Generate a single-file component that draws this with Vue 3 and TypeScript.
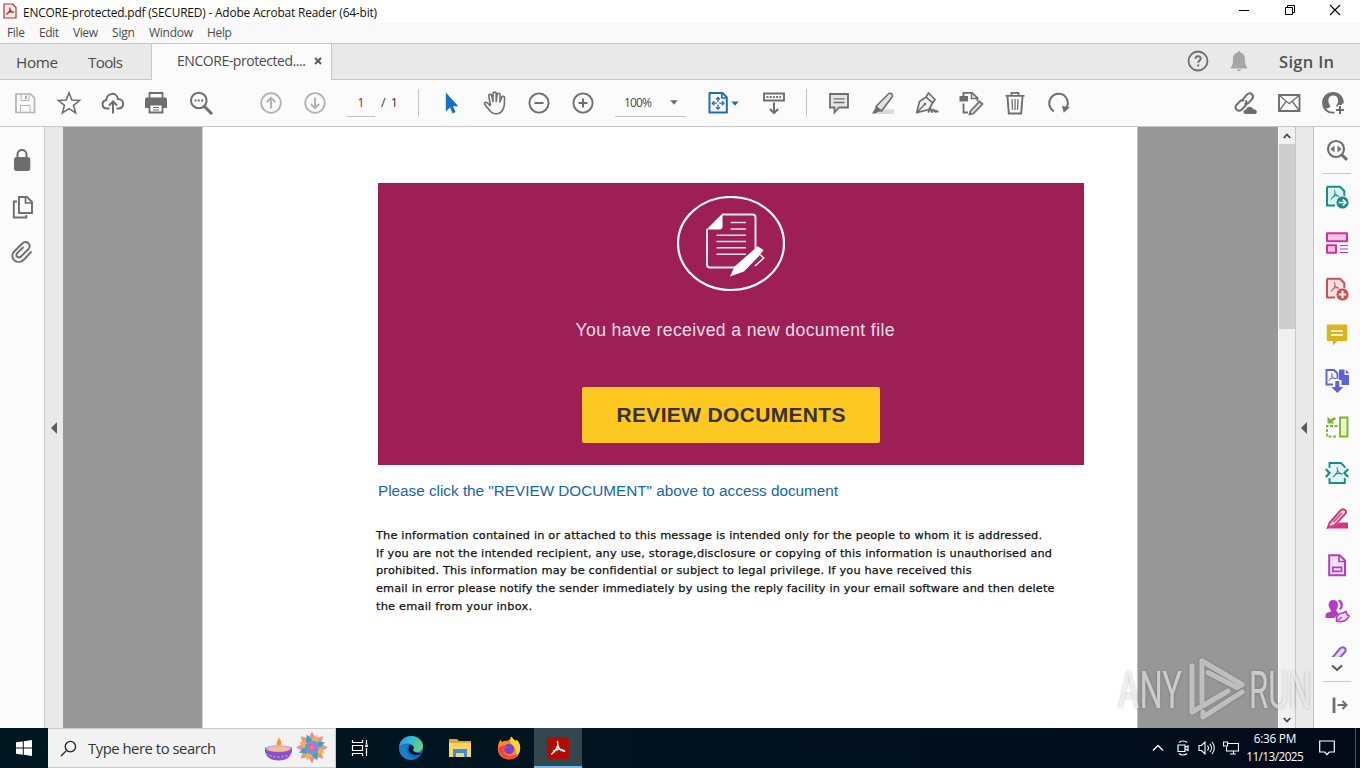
<script setup lang="ts">
interface MenuItem { label: string; width: number }

const menus: MenuItem[] = [
  { label: 'File', width: 18 },
  { label: 'Edit', width: 20 },
  { label: 'View', width: 25 },
  { label: 'Sign', width: 23 },
  { label: 'Window', width: 44 },
  { label: 'Help', width: 25 },
]

const notice: MenuItem[] = [
  { label: 'The information contained in or attached to this message is intended only for the people to whom it is addressed.', width: 666 },
  { label: 'If you are not the intended recipient, any use, storage,disclosure or copying of this information is unauthorised and', width: 676 },
  { label: 'prohibited. This information may be confidential or subject to legal privilege. If you have received this', width: 595.5 },
  { label: 'email in error please notify the sender immediately by using the reply facility in your email software and then delete', width: 678.5 },
  { label: 'the email from your inbox.', width: 156 },
]

// Tracks a label out (or in) so that it fills the given width.
const vFit = {
  mounted(el: HTMLElement, binding: { value: number }) {
    const count = (el.textContent ?? '').length
    const natural = el.getBoundingClientRect().width
    const step = (binding.value - natural) / Math.max(1, count - 1)
    el.style.letterSpacing = `${step.toFixed(3)}px`
    el.style.marginRight = `${(-step).toFixed(3)}px`
  },
}
</script>

<template>
  <div class="screen">
    <svg class="defs" aria-hidden="true">
      <symbol id="tri" viewBox="0 0 12 12">
        <path d="M5.6 1.2c1 2.6-.6 6.600-3.800 9.300M5.600 1.200c.1 3.300 1.600 5.800 5.200 6.400M3.600 7.800c2.200-1 4.600-1.300 7.200-.3" fill="none" stroke="currentColor" stroke-width="1.1" stroke-linecap="round" />
      </symbol>
      <symbol id="sheet" viewBox="0 0 24 24">
        <path d="M2 1.700h13l4.300 4.300v6M10 20.500H2V1.700" fill="none" stroke="currentColor" stroke-width="2" stroke-linejoin="round" />
      </symbol>
    </svg>

    <header class="titlebar">
      <svg class="applogo" viewBox="0 0 14 16"><path d="M1 1h8.500l3.500 3.500V15H1z" fill="#fff1ef" stroke="#c8262c" stroke-width="1.200" stroke-linejoin="round" /><path d="M6.700 4.500c.8 2-.6 5-3.500 7M6.700 4.500c0 2.500 1.500 4.500 4.300 5M4.500 9.800c2-1 4.500-1.200 6.500-.3" fill="none" stroke="#c8262c" stroke-width="1.300" /></svg>
      <span v-fit="354" class="title">ENCORE-protected.pdf (SECURED) - Adobe Acrobat Reader (64-bit)</span>
      <div class="winbtns">
        <svg viewBox="0 0 12 12"><path d="M1 6.500h10" stroke="#000" /></svg>
        <svg viewBox="0 0 12 12"><path d="M1.500 3.500h7v7h-7zM3.500 3.500v-2h7v7h-2" fill="none" stroke="#000" /></svg>
        <svg viewBox="0 0 12 12"><path d="M1 1l10 10M11 1L1 11" stroke="#000" stroke-width="1.100" /></svg>
      </div>
    </header>

    <nav class="menubar">
      <span v-for="m in menus" :key="m.label" class="menu"><span v-fit="m.width" class="t">{{ m.label }}</span></span>
    </nav>

    <div class="tabs">
      <div class="tab home"><span v-fit="42" class="t">Home</span></div>
      <div class="tab tools"><span v-fit="35" class="t">Tools</span></div>
      <div class="tab active">
        <span v-fit="129" class="t">ENCORE-protected....</span>
        <svg class="close" viewBox="0 0 8 8"><path d="M1 1l6 6M7 1L1 7" stroke="#555" stroke-width="1.800" /></svg>
      </div>
      <div class="account">
        <svg class="ic" viewBox="0 0 24 24"><circle cx="12" cy="12" r="9.500" fill="none" stroke="#6e6e6e" stroke-width="1.800" /><path d="M9.500 9.700c0-3.200 5.200-3.200 5.200-.2 0 2-2.500 2.200-2.500 4.300M12.200 15.500v2" fill="none" stroke="#6e6e6e" stroke-width="2" /></svg>
        <svg class="ic bell" viewBox="0 0 24 24"><path d="M12 2c1 0 1.500.8 1.500 1.700 3.400.8 4.500 3.200 4.500 6.300 0 4.500.7 6.500 2.200 8.500v1H3.800v-1C5.300 16.500 6 14.500 6 10c0-3.100 1.100-5.500 4.500-6.300C10.500 2.800 11 2 12 2zM9.800 20.400h4.400c-.4 2-4 2-4.400 0z" fill="#a6a6a6" stroke="none" /></svg>
        <span v-fit="55" class="t signin">Sign In</span>
      </div>
    </div>

    <div class="toolbar">
      <div class="group first">
        <div class="cell"><svg class="ic dim" viewBox="0 0 24 24"><path d="M3 3h14.500L21.500 7v14.500H3z" stroke-width="1.700" /><path d="M8 3.500v6h8v-6" /><path d="M13 4.500v3.500" stroke-width="2" /><path d="M7.500 21v-6.500h9.500V21" /></svg></div>
        <div class="cell"><svg class="ic" viewBox="0 0 24 24"><path d="M12 1.800l2.800 7.300 7.800.4-6.100 4.900 2.100 7.500-6.600-4.200-6.600 4.200 2.100-7.500L1.400 9.500l7.800-.4z" stroke-width="1.600" /></svg></div>
        <div class="cell"><svg class="ic" viewBox="0 0 24 24"><path d="M8.500 17.500H6c-6 0-5.600-7.800-.8-8.300C5.500 1.500 16 .5 17 8c6.600-.2 6.900 9.500.5 9.500h-2" stroke-width="2" /><path d="M12 22.500V11M8 14.500l4-4 4 4" stroke-width="2" /></svg></div>
        <div class="cell"><svg class="ic shift" viewBox="0 0 24 24"><path d="M5.500 7V2h13v5" stroke-width="1.800" /><path d="M2.500 6.500h19a1.500 1.500 0 0 1 1.500 1.500v9h-4v-4H5v4H1V8a1.500 1.500 0 0 1 1.500-1.500z" class="f" /><path d="M5.500 13.500h13v8h-13z" fill="#fff" stroke-width="1.800" /><path d="M9 16.500h6M9 19h6" stroke-width="1.200" /></svg></div>
        <div class="cell"><svg class="ic" viewBox="0 0 24 24"><circle cx="9.800" cy="9.500" r="7.800" stroke-width="2" /><path d="M15.500 15.500l6.700 6.700" stroke-width="3" stroke-linecap="round" /><path d="M5.500 9.500h2M8.800 9.500h2M12.100 9.500h2" stroke-width="2" /></svg></div>
      </div>
      <div class="group nav">
        <div class="cell"><svg class="ic dim" viewBox="0 0 24 24"><circle cx="12" cy="12" r="9.800" stroke-width="1.800" /><path d="M12 17.500V7M7.800 11L12 6.800l4.200 4.200" stroke-width="2" /></svg></div>
        <div class="cell"><svg class="ic dim" viewBox="0 0 24 24"><circle cx="12" cy="12" r="9.800" stroke-width="1.800" /><path d="M12 6.500V17M7.800 13l4.200 4.200 4.200-4.200" stroke-width="2" /></svg></div>
      </div>
      <div class="pagebox">1</div>
      <div class="pagecount"><span v-fit="17" class="t">/ 1</span></div>
      <i class="sep"></i>
      <div class="group cursor">
        <div class="cell"><svg class="ic" viewBox="0 0 24 24"><path d="M6.800 1.500V20.500l4.200-4 2.600 6 3-1.400-2.600-5.800h5.300z" fill="#1670c5" stroke="none" /></svg></div>
        <div class="cell"><svg class="ic" viewBox="0 0 24 24"><path d="M7.500 14.500L5.800 5.200a1.500 1.500 0 0 1 3-.6L10 10.500V2.800a1.600 1.600 0 0 1 3.200-.2V10.500L14.200 3.600a1.500 1.500 0 0 1 3 .2L16.900 11l1.700-4.500a1.500 1.500 0 0 1 3 .7c-.4 3 .2 6-.8 9-1.200 4-3.800 6.600-7.800 6.600-4 0-6-2-8-5.400L1.600 13.200c-.6-1.700 1.500-2.500 2.600-1.400l3.300 3.200" stroke-width="1.600" stroke-linejoin="round" /></svg></div>
        <div class="cell"><svg class="ic" viewBox="0 0 24 24"><circle cx="12" cy="12" r="9.600" stroke-width="1.900" /><path d="M7.500 12h9" stroke-width="2" /></svg></div>
        <div class="cell"><svg class="ic" viewBox="0 0 24 24"><circle cx="12" cy="12" r="9.600" stroke-width="1.900" /><path d="M7.500 12h9M12 7.500v9" stroke-width="2" /></svg></div>
      </div>
      <div class="zoombox"><span v-fit="28" class="t">100%</span><svg class="caret" viewBox="0 0 8 5"><path d="M.2.300h7.600L4 4.800z" fill="#6e6e6e" /></svg></div>
      <div class="cell fit">
        <svg class="ic" viewBox="0 0 24 24"><g stroke="#1f6cb8"><path d="M2.500 2h13l4.300 4.300V21.500H2.500z" stroke-width="2" /><path d="M14.800 2v5h5" stroke-width="1.600" /><path d="M11 7v10.500M5.800 12.200h10.600" stroke-width="1.300" stroke-dasharray="4 2.500" /><path d="M9 8.500l2-2 2 2M9 16.200l2 2 2-2M7.300 10.200l-2 2 2 2M14.900 10.200l2 2-2 2" stroke-width="1.300" /></g></svg>
        <svg class="caret blue" viewBox="0 0 8 5"><path d="M.3.400h7.400L4 4.700z" fill="#1f6cb8" /></svg>
      </div>
      <div class="cell kb"><svg class="ic" viewBox="0 0 24 24"><path d="M2 2.500h20v7H2z" stroke-width="1.900" /><path d="M4.500 6h15" stroke-width="2" stroke-dasharray="1.900 1.300" /><path d="M12 11.500V22M7.800 18l4.200 4 4.200-4" stroke-width="2" /></svg></div>
      <i class="sep s2"></i>
      <div class="group edit">
        <div class="cell"><svg class="ic" viewBox="0 0 24 24"><path d="M3 3h18v13.500h-9l-4.500 5v-5H3z" stroke-width="1.800" fill="#e4e4e4" /><path d="M6.500 7.800h11M6.500 11.500h11" stroke-width="1.300" /></svg></div>
        <div class="cell"><svg class="ic" viewBox="0 0 24 24"><path d="M10 18.500h13V23H6z" fill="#dadada" stroke="none" /><path d="M5 15.500L17.500 2.800c2.500-1.500 4.800.8 3.600 3.200L10.500 20z" stroke-width="1.600" fill="#e2e2e2" /><path d="M5 15.500l5.500 4.500-3.500 1-2 1.500H1l2.500-4z" class="f" /></svg></div>
        <div class="cell"><svg class="ic" viewBox="0 0 24 24"><path d="M1.800 21.500L4.500 10.500 11 6l6.500 6-3.500 6.500zM11 6l2.500-4 6.500 6.500-2.500 3.500" stroke-width="1.700" fill="#f1f1f1" /><path d="M2 21.500L9.500 13.500" stroke-width="1.400" /><circle cx="10" cy="13" r="1.300" class="f" /><path d="M13 21.500c3-4 3-4.500 3.500-2.500s0 3 1.500.5 1.500 1.500 2 1.500 1-2.500 1.500-.5H23.500" stroke-width="1.800" /></svg></div>
        <div class="cell"><svg class="ic" viewBox="0 0 24 24"><path d="M4.500 5V1.800H13L18.500 7v3.500M4.500 12.500v9H9" stroke-width="1.800" /><path d="M12.500 2v5.500H18" stroke-width="1.500" /><path d="M.5 5h8.500v5.500H.5z" class="f" /><path d="M11.500 20L20.500 10.500l3 2.500-9 9.500-4 .8z" stroke-width="1.700" fill="#ddd" /></svg></div>
        <div class="cell"><svg class="ic" viewBox="0 0 24 24"><path d="M2.500 4.800h19M8.500 4V1.800h7V4" stroke-width="1.800" /><path d="M4.500 5.500L5.800 22.500h12.400L19.500 5.500" stroke-width="1.900" /><path d="M9 8l.5 11M12 8v11M15 8l-.5 11" stroke-width="1.300" /></svg></div>
        <div class="cell"><svg class="ic" viewBox="0 0 24 24"><path d="M6.800 20.500C1.500 16.500 1 10.800 4 6.800 8 1.600 15.500 1.600 19 6.500c2.300 3.300 2.300 7.200.3 10.800" stroke-width="2" /><path d="M15 15l7.800 1.200-6 5.500z" class="f" /></svg></div>
      </div>
      <div class="group share">
        <div class="cell"><svg class="ic" viewBox="0 0 24 24"><path d="M10.500 10.500c-.8-1.500-.5-2.600.5-3.700l3-3.300c3.500-3.300 8 1 5 4.700l-3.200 3.500c-1.200 1.300-3 1.500-4.300.7" stroke-width="2" /><path d="M12.500 9.500c1.500 1.500 1.200 3.700-.2 5.200l-3.500 3.800c-3.500 3.300-8.300-1-5-4.900L7.300 10c1-1 2.200-1.300 3.500-.9" stroke-width="2" /><path d="M12.500 23c-3-.5-2.500-4.500.5-4.300.8-4 6.300-4 7.200-.5 4-.7 5 4.300 1.800 4.800z" class="f" /></svg></div>
        <div class="cell"><svg class="ic" viewBox="0 0 24 24"><path d="M2 4h20.500v16H2z" stroke-width="1.900" /><path d="M2.500 4.500l9.700 8.200 9.800-8.200M2.500 19.500L9 10.500M22 19.500l-6.500-9" stroke-width="1.300" /></svg></div>
        <div class="cell"><svg class="ic" viewBox="0 0 24 24"><path d="M13.500 21.600C6.500 22.500 2 17.600 2 12 2 6 6.500 1.800 12 1.800S22 6 21.900 12.500" stroke-width="1.800" /><path d="M3.500 7c1-3 4.300-5 8.500-5s7.500 2 9 6.500V14h-3.500l-2 2-.5-1.200c1.800-1.800 2.200-4 2-6-.3-2.800-2-4.300-4.800-4.300S7.500 6 7.400 9c0 2.500.6 4.300 1.700 5.600.5 1.500-.5 2.500-4.600 3.400C2 15 2.500 10 3.500 7z" class="f" /><path d="M15 19h8M19 15v8" stroke-width="2" /></svg></div>
      </div>
    </div>

    <main class="body">
      <aside class="leftrail">
        <div class="lcell"><svg class="ic" viewBox="0 0 24 24"><path d="M7.500 11V6.500c0-6 9-6 9 0V11" stroke-width="2" /><rect x="4" y="9" width="16.300" height="14" rx="2.500" class="f" /></svg></div>
        <div class="lcell"><svg class="ic pages" viewBox="0 0 24 24"><path d="M8 2h8l5 5v11H8z" stroke-width="1.900" /><path d="M14.500 2.500v5.500H21" stroke-width="1.700" /><path d="M6 6.500H2.800V22.500h12.500V20" stroke-width="1.900" /></svg></div>
        <div class="lcell"><svg class="ic clip" viewBox="0 0 24 24"><path d="M21.500 11.500l-7.500 8c-6.500 6.300-15.500-1-10-7.800L12 3.800c4.500-4.200 10.200.8 6.500 5.200l-7.500 7.500c-2.700 2.500-6-.8-3.800-3.400L13.500 7" stroke-width="1.900" /></svg></div>
      </aside>
      <div class="strip left"><svg viewBox="0 0 6 12"><path d="M6 0v12L0 6z" fill="#5c5c5c" /></svg></div>
      <section class="canvas">
        <article class="page">
          <div class="banner">
            <svg class="emblem" viewBox="0 0 108 96">
              <ellipse cx="54" cy="47.500" rx="53" ry="46.500" fill="none" stroke="#fff" stroke-width="2.200" />
              <path d="M45 18.500h30.500a3 3 0 0 1 3 3v33M59 71.500H33a3 3 0 0 1-3-3V33" fill="none" stroke="#fbe9f1" stroke-width="2" />
              <path d="M29.500 33.500L45.500 17.500v13a3 3 0 0 1-3 3z" fill="#fff" />
              <path d="M53.500 26.500h15.500M53.500 33h15.500M39.500 39.300h29.500M39.500 45.500h29.500M39.500 51.800h29.500M39.500 58.300h29.500" stroke="#f8dfea" stroke-width="1.600" />
              <path d="M53 80.500l4.500-10L77 53.500l3.500-3.300 6 3.800-3 4.500L67 75.500z" fill="#fff" />
              <path d="M83.500 59l3.300 3L78 70" fill="none" stroke="#fff" stroke-width="1.500" />
            </svg>
            <p class="headline"><span v-fit="319" class="t">You have received a new document file</span></p>
            <button class="review"><span v-fit="229" class="t">REVIEW DOCUMENTS</span></button>
          </div>
          <p class="hint"><span v-fit="460" class="t">Please click the "REVIEW DOCUMENT" above to access document</span></p>
          <div class="notice">
            <p v-for="n in notice" :key="n.label"><span v-fit="n.width" class="t">{{ n.label }}</span></p>
          </div>
        </article>
      </section>
      <div class="scroll">
        <div class="arrow"><svg viewBox="0 0 8 6"><path d="M.8 5L4 1.500 7.200 5" fill="none" stroke="#444" stroke-width="1.800" /></svg></div>
        <div class="thumb"></div>
        <div class="arrow end"><svg viewBox="0 0 8 6"><path d="M.8 1L4 4.500 7.200 1" fill="none" stroke="#444" stroke-width="1.800" /></svg></div>
      </div>
      <div class="strip right"><svg viewBox="0 0 6 12"><path d="M6 0v12L0 6z" fill="#5c5c5c" /></svg></div>
      <aside class="rightrail">
        <div class="rcell line"><svg class="ic" viewBox="0 0 24 24"><circle cx="11" cy="10" r="8" stroke-width="2.200" /><path d="M17 16l5 4.800" stroke-width="3" /><path d="M9.500 6.500v7L5.500 10zM12.500 6.500v7l4-3.500z" class="f" /></svg></div>
        <div class="rcell"><svg class="ic teal" viewBox="0 0 24 24"><path d="M2.500 1.800H14L18.500 6v14H2.500z" fill="#d9f2f0" stroke="none" /><use href="#sheet" /><use href="#tri" x="4.500" y="4.500" width="11" height="11" /><circle cx="17.500" cy="17.500" r="6.500" fill="currentColor" stroke="#fafafa" stroke-width=".8" /><path d="M13.800 17.500h6M17.800 14.500l3 3-3 3" stroke="#fff" stroke-width="1.700" /></svg></div>
        <div class="rcell"><svg class="ic pink" viewBox="0 0 24 24"><path d="M2 2.200h20v8H2zM2 14.200h9v7.500H2z" fill="#f7c4e6" stroke-width="2" stroke-linejoin="round" /><path d="M15 14.500h8M15 18h8M15 21.500h8" stroke-width="1.200" /></svg></div>
        <div class="rcell"><svg class="ic red" viewBox="0 0 24 24"><path d="M2.500 1.800H14L18.500 6v14H2.500z" fill="#fbe3e3" stroke="none" /><use href="#sheet" /><use href="#tri" x="4.500" y="4.500" width="11" height="11" /><circle cx="17.500" cy="17.500" r="6.500" fill="currentColor" stroke="#fafafa" stroke-width=".8" /><path d="M13.800 17.500h7.400M17.500 13.800v7.400" stroke="#fff" stroke-width="2" /></svg></div>
        <div class="rcell"><svg class="ic" viewBox="0 0 24 24"><path d="M3 1.500h18a1.200 1.200 0 0 1 1.200 1.200v14a1.200 1.200 0 0 1-1.200 1.200H12.500L8 22.500v-4.600H3a1.200 1.200 0 0 1-1.200-1.200v-14A1.200 1.200 0 0 1 3 1.500z" fill="#dbb31e" stroke="none" /><path d="M6 8h12M6 12h12" stroke="#fff3b8" stroke-width="1.800" /></svg></div>
        <div class="rcell"><svg class="ic indigo" viewBox="0 0 24 24"><path d="M8 15.500H1.500V1H9l3.500 3.500V10" stroke-width="1.900" /><use href="#tri" x="2.500" y="4" width="9" height="9" /><path d="M14 .5h5.500V6H24v10h-7.500v-5H14z" class="c" /><path d="M20.800.5L24.300 4.500h-3.500z" class="c" /><path d="M10.300 12h4v6h4L12.300 24l-6-6h4z" class="c" stroke="#fafafa" stroke-width=".7" /></svg></div>
        <div class="rcell"><svg class="ic green" viewBox="0 0 24 24"><path d="M15 2.500h7.500v19H15z" fill="#e6f6c8" stroke-width="1.900" /><path d="M12.500 11H2V21.500h10.500" stroke-width="1.800" stroke-dasharray="3 1.500" /><path d="M2.500 1.700V8.500h7L7.300 6.300 11 4.300 9.700 2 5.500 4.300z" class="c" /></svg></div>
        <div class="rcell"><svg class="ic teal" viewBox="0 0 24 24"><path d="M4.500 7V2H16l3.800 3.800V7M4.500 17v5h15.300v-5" fill="#def5f4" stroke-width="1.900" /><path d="M5 7.500h15v9H5z" fill="#def5f4" stroke="none" /><use href="#tri" x="6.500" y="5.500" width="12" height="12" /><path d="M.8 8l3.700 4-3.700 4M23.200 8l-3.700 4 3.700 4" stroke-width="2.200" /></svg></div>
        <div class="rcell"><svg class="ic mag" viewBox="0 0 24 24"><path d="M1 21.500h22v-6h-9l-5 4z" class="c" /><path d="M4.500 16L15.500 3.500c3-3 7 .3 4.700 3.500L9.500 18.500 2.800 20.500z" fill="#f9cfe0" stroke-width="1.900" /><path d="M8.500 15L17 6" stroke-width="1.200" /></svg></div>
        <div class="rcell"><svg class="ic violet" viewBox="0 0 24 24"><path d="M4.200 2.300h10.500L20 7.500v14.800H4.200z" fill="#f8e4fa" stroke-width="2" /><path d="M14 2.500v6h6" stroke-width="1.700" /><path d="M7.800 14.300h8.700v4H7.800z" stroke-width="1.700" /></svg></div>
        <div class="rcell"><svg class="ic violet" viewBox="0 0 24 24"><path d="M8 1c4 0 5.500 3 5 6.300-.3 2-1.500 3-1.500 4.200 0 1.300 2.500 1.800 1.500 3.500L9.500 19H.8c-.8-4.500.7-5.300 4-6 2-.5 1-2-.2-3.700C2.500 5.500 4 1 8 1z" class="c" /><path d="M13.500 1.500c4 1.500 4 6 1.500 9" stroke-width="2.400" /><path d="M11.500 22c-.5-5 1.500-8 6.500-8l3-1.500 1 3 2 1.500c-2 4.500-6.500 6.500-12.500 5z" fill="#f8e4fa" stroke-width="1.700" /><path d="M12 22l5-4" stroke-width="1.300" /></svg></div>
        <div class="rcell cut"><svg class="ic lilac" viewBox="0 0 24 24"><path d="M5 15.500L15 3.500c3.500-3 7.500.5 4.500 4L9 19z" fill="#e7d8f7" stroke-width="2" /></svg></div>
        <div class="rcell more"><svg viewBox="0 0 12 8"><path d="M1 1.500l5 4.500 5-4.500" fill="none" stroke="#555" stroke-width="2" /></svg></div>
        <div class="rcell exit"><svg class="ic" viewBox="0 0 24 24"><path d="M7 4.500v15.500" stroke-width="2.800" /><path d="M10.500 12h9M15.500 8l4 4-4 4" stroke-width="2" /></svg></div>
      </aside>
    </main>

    <svg class="watermark" viewBox="0 0 200 68" aria-hidden="true">
      <g class="wm">
        <text x="3" y="54" textLength="64" lengthAdjust="spacingAndGlyphs">ANY</text>
        <text x="134" y="54" textLength="62" lengthAdjust="spacingAndGlyphs">RUN</text>
        <path d="M87 48V7l40 23.500-5 3L93 18.500M88 63l39-25M77 12v46l36-21M88 63v-5" />
      </g>
    </svg>

    <footer class="taskbar">
      <div class="start"><svg viewBox="0 0 16 16"><path d="M0 2.300L6.800 1.400v6.200H0zM7.800 1.200L16 0v7.600H7.800zM0 8.600h6.800v6.200L0 13.800zM7.800 8.600H16V16l-8.200-1.200z" fill="#fff" /></svg></div>
      <div class="search">
        <svg class="glass" viewBox="0 0 18 18"><circle cx="11" cy="7" r="5.500" fill="none" stroke="#222" stroke-width="1.400" /><path d="M7 11L1 17" stroke="#222" stroke-width="1.400" /></svg>
        <span v-fit="128" class="t">Type here to search</span>
        <svg class="diya" viewBox="0 0 64 36">
          <path d="M13.800 16c-3-3 .7-5 .7-9 3 4 4 7 1 9.500z" fill="#f59a23" />
          <path d="M1 18c2-3 25-3 27 0 .8 8-5 12.500-13.500 12.500S0 26 1 18z" fill="#8b52c8" />
          <ellipse cx="14.500" cy="18.500" rx="12.500" ry="3.500" fill="#d9a6e8" />
          <ellipse cx="14.500" cy="19" rx="10" ry="2.300" fill="#f3c08e" />
          <path d="M2 24c6 4 19 4 25 0" fill="none" stroke="#b993ea" stroke-width="1.500" stroke-dasharray="2 2" />
          <g transform="translate(48 17.500)">
            <g v-for="a in 8" :key="a" :transform="`rotate(${a * 45})`"><path d="M0-16l3.500 6-3.500 6-3.500-6z" :fill="a % 2 ? '#f0957a' : '#e88fae'" /></g>
            <g v-for="a in 8" :key="'b' + a" :transform="`rotate(${a * 45 + 22.5})`"><path d="M0-14l3.500 7L0-2l-3.500-5z" :fill="a % 2 ? '#3aa5b5' : '#eeb35a'" /></g>
            <circle r="7" fill="#56a4d6" /><circle r="5" fill="#c86ac8" /><circle r="1.800" fill="#f08a6a" />
          </g>
        </svg>
      </div>
      <div class="task"><svg class="tv" viewBox="0 0 18 18"><path d="M1.500 1v2.500h10V1M1.500 17v-2.500h10V17M1.500 6.500h10v5h-10zM15.500 1v4M15.500 9v8" fill="none" stroke="#fff" stroke-width="1.200" /><path d="M14.300 5.500h2.500v2.500h-2.500z" fill="#fff" /></svg></div>
      <div class="task edge"><svg class="app" viewBox="0 0 24 24"><defs><linearGradient id="eg" x1="0" y1="0" x2="1" y2=".4"><stop offset="0" stop-color="#2796d8" /><stop offset=".5" stop-color="#35b8d8" /><stop offset="1" stop-color="#5fd184" /></linearGradient></defs><circle cx="12" cy="12" r="12" fill="#1667b8" /><path d="M0 11C1 4 6 0 12 0c7 0 12 5 12 10 0 4-3 6-6.500 6-2.500 0-4-1-3.500-2 2-3-.5-6.500-5-6.500C5 7.500 1.500 9 0 11z" fill="url(#eg)" /><path d="M8 12c-1 5 3 10 9 10-8 5-17-2-17-10 2-4 8-5 10-3-1 .6-1.700 1.700-2 3z" fill="#1b7ecb" /><path d="M10.500 9.500c-2.500 3.500 0 9 5.500 9.500 3 .2 5-.7 7-2-2 .3-8.500 0-9-3 0-1 1-1.500 1-2.500s-2-3-4.500-2z" fill="#041a2a" /></svg></div>
      <div class="task"><svg class="app folder" viewBox="0 0 22 20"><path d="M0 1h8l2 2h12v16H0z" fill="#e5a92c" /><path d="M0 5h22v14H0z" fill="#fcd768" /><path d="M4 11h14v8H4z" fill="#3b8fd6" /><path d="M7 15h8v4H7z" fill="#fcd768" /></svg></div>
      <div class="task"><svg class="app" viewBox="0 0 24 24"><path d="M12 23.500C5 23.500.5 18.500.8 12 1 8 2.500 5.500 3.500 3.500c.5 1.500 1 2 2 2.500C7 4.500 8.500 4.500 10 5c3-1 3-3 4.500-4.500 1 2.500 3 3 4.500 4.800.5-.6.500-1 .5-1.800 2.500 3 3.700 5 3.700 8.500 0 7-5 11.500-11.200 11.500z" fill="#ff8a1f" /><path d="M14.500.500c1 2.500 3 3 4.500 4.800.5-.6.500-1 .5-1.800 2.500 3 3.700 5 3.700 8.500 0 4-2 7-4.500 9 2-8-2-11-5-13-1-3 0-5.500.8-7.500z" fill="#ffd43a" /><circle cx="12" cy="13" r="5.200" fill="#7a43d8" /><path d="M1 12c1 7 6 11 11 11s8-3 9-6c-3 3-9 4-12.500 1C5 15 7 12 11 12 9 9 4 9 1 12z" fill="#f7433f" /></svg></div>
      <div class="task current"><svg class="app" viewBox="0 0 22 22"><rect width="22" height="22" rx="3.500" fill="#b30b00" /><path d="M10.500 4.500c1.500 4-1.500 9.500-5.800 12.500M10.500 4.500c0 5.500 2.500 9.500 7 9.800M6.500 14c3.500-2 7.500-2.300 11-.2" fill="none" stroke="#fff" stroke-width="1.500" stroke-linecap="round" /></svg></div>
      <div class="tray">
        <svg class="up" viewBox="0 0 12 8"><path d="M1 6.500l5-5 5 5" fill="none" stroke="#fff" stroke-width="1.300" /></svg>
        <svg class="meet" viewBox="0 0 14 16"><path d="M3 2.500c2-2 6-2 8 0M3 13.500c2 2 6 2 8 0M2 5h7v6.500H2zM9 7.500l3-1.500v4.500L9 9" fill="none" stroke="#fff" stroke-width="1.200" /></svg>
        <svg class="vol" viewBox="0 0 18 16"><path d="M1 5.500h2.500L7 2v12l-3.500-3.500H1zM9.500 5.500c1.300 1.500 1.300 3.500 0 5M11.800 3.800c2.200 2.500 2.200 6 0 8.400M14 2c3 3.500 3 8.500 0 12" fill="none" stroke="#fff" stroke-width="1.100" /></svg>
        <svg class="net" viewBox="0 0 16 14"><path d="M5 2.500h10.500v7.500H3.500V6M7 13h6M10.500 10v3M.5 1h4v4h-4z" fill="none" stroke="#fff" stroke-width="1.100" /></svg>
        <div class="clock"><span v-fit="42.500" class="t">6:36 PM</span><span v-fit="57.500" class="t">11/13/2025</span></div>
        <svg class="note" viewBox="0 0 16 16"><path d="M.7 1h14.600v11h-5L8 14.500 5.700 12h-5z" fill="none" stroke="#fff" stroke-width="1.200" /></svg>
        <i class="peek"></i>
      </div>
    </footer>
  </div>
</template>

<style>
body { margin: 0; overflow: hidden; }
</style>

<style scoped>
* { box-sizing: border-box; }
p { margin: 0; }
.screen { position: relative; width: 1360px; height: 768px; display: flex; flex-direction: column; background: #fff; font-family: "Open Sans", "Noto Sans", sans-serif; overflow: hidden; }
.defs { position: absolute; width: 0; height: 0; }
.t, .title { display: inline-block; white-space: nowrap; }
svg { display: block; flex: none; }
.ic { width: 24px; height: 24px; fill: none; stroke: #6e6e6e; overflow: visible; }
.ic.dim { stroke: #b2b2b2; }
.f { fill: #6e6e6e; stroke: none; }
.c { fill: currentColor; stroke: none; }

.titlebar { height: 23px; flex: none; display: flex; align-items: center; padding-left: 3px; background: #fff; }
.applogo { width: 14px; height: 16px; margin: -2px 6px 0 0; }
.title { font-size: 11.900px; line-height: 22px; height: 22px; color: #111; }
.winbtns { margin-left: auto; display: flex; gap: 33.500px; padding: 0 19px 3px 0; }
.winbtns svg { width: 12px; height: 12px; }

.menubar { height: 20px; flex: none; display: flex; gap: 14px; padding-left: 7px; background: #f9f9f9; font-size: 12px; line-height: 19px; color: #4c4c4c; }
.menu { white-space: nowrap; }

.tabs { height: 37px; flex: none; display: flex; background: #e9e9e9; border-top: 1px solid #c6c6c6; border-bottom: 1px solid #c6c6c6; line-height: 36px; color: #4b4b4b; }
.tab { font-size: 15.200px; white-space: nowrap; }
.home { padding-left: 16px; width: 88px; }
.tools { width: 63px; }
.active { width: 181px; margin-bottom: -1px; padding: 0 0 2px 25px; font-size: 14px; background: #fbfbfb; border-left: 1px solid #c6c6c6; border-right: 1px solid #c6c6c6; display: flex; align-items: center; }
.close { width: 8px; height: 8px; margin-left: 8px; }
.account { margin-left: auto; display: flex; align-items: center; padding-right: 26px; }
.account .ic { margin-top: -2px; }
.account .bell { margin: -2px 28px 0 17px; }
.signin { font-size: 16.500px; font-weight: 600; line-height: 34px; color: #505050; }

.toolbar { height: 47px; flex: none; display: flex; align-items: center; background: #fbfbfb; border-bottom: 1px solid #c6c6c6; }
.group { display: flex; }
.cell { width: 44px; height: 46px; flex: none; display: flex; align-items: center; justify-content: center; }
.first { margin-left: 3px; }
.shift { margin-left: -2px; }
.nav { margin-left: 26px; }
.pagebox { width: 28px; height: 27px; margin-left: 10px; border-bottom: 1px solid #c0c0c0; text-align: center; font-size: 12px; line-height: 26px; color: #444; }
.pagecount { margin-left: 6px; width: 37px; padding-bottom: 1px; font-size: 12.500px; color: #333; }
.sep { width: 1px; height: 28px; background: #c4c4c4; flex: none; }
.cursor { margin-left: 10px; }
.zoombox { width: 71px; height: 27px; margin-left: 10px; padding-left: 9px; border-bottom: 1px solid #c0c0c0; display: flex; align-items: center; font-size: 12px; color: #4a4a4a; }
.caret { width: 8px; height: 5px; margin-left: 18px; }
.fit { margin-left: 11px; position: relative; }
.blue { position: absolute; left: 34px; top: 21px; margin: 0; }
.kb { margin-left: 11px; }
.s2 { margin: 0 10px; }
.share { margin-left: auto; margin-right: 5px; }

.body { flex: 1; min-height: 0; display: flex; background: #979797; }
.leftrail { width: 45px; padding-top: 10px; background: #fbfbfb; border-right: 1px solid #c9c9c9; }
.lcell { width: 44px; height: 46px; display: flex; align-items: center; justify-content: center; }
.pages { margin: 2px 0 0 2px; }
.strip { width: 18px; background: #e9e9e9; display: flex; align-items: center; justify-content: center; }
.strip svg { width: 6px; height: 12px; }
.strip.right { width: 18px; border-right: 1px solid #c2c2c2; }
.strip.right svg { margin-left: -1px; }
.canvas { flex: 1; display: flex; padding-left: 139px; }
.page { width: 936px; height: 601px; background: #fff; border-left: 1px solid #cfcfcf; border-right: 1px solid #bbb; padding: 56px 0 0 175px; overflow: hidden; }
.banner { width: 706px; height: 282px; background: #9e1f55; display: flex; flex-direction: column; align-items: center; padding-top: 13px; }
.emblem { width: 108px; height: 96px; }
.headline { margin: 24px 0 0 8px; font: 17.600px/28px "Liberation Sans", Arial, sans-serif; color: #f6dfe9; }
.review { width: 298px; height: 56px; margin-top: 42.500px; padding: 0; border: 0; border-radius: 2px; background: #fdc81f; font: bold 21px/54px "Liberation Sans", Arial, sans-serif; color: #38302c; }
.hint { margin-top: 15px; font: 15.300px/22px "Liberation Sans", Arial, sans-serif; color: #1265b3; }
.notice { margin: 25px 0 0 -2px; font: 11.300px/17.700px "DejaVu Sans", "Open Sans", sans-serif; color: #111; -webkit-text-stroke: .25px #111; }
.notice p { white-space: nowrap; height: 17.700px; }

.scroll { width: 18px; flex: none; display: flex; flex-direction: column; background: #f0f0f0; border-left: 1px solid #fafafa; border-right: 1px solid #c6c6c6; }
.arrow { height: 17px; display: flex; align-items: center; justify-content: center; }
.arrow svg { width: 8px; height: 6px; }
.arrow.end { margin-top: auto; }
.thumb { height: 185px; background: #cdcdcd; }

.rightrail { width: 46px; flex: none; background: #fbfbfb; }
.rcell { width: 46px; height: 46px; display: flex; align-items: center; justify-content: center; }
.line { height: 47px; background: linear-gradient(#c9c9c9, #c9c9c9) center bottom / 28px 1px no-repeat; }
.cut { height: 23px; align-items: flex-start; padding-top: 11px; overflow: hidden; }
.more { height: 25px; padding-bottom: 3px; background: linear-gradient(#c9c9c9, #c9c9c9) center bottom / 28px 1px no-repeat; }
.more svg { width: 12px; height: 8px; }
.exit { padding-left: 4px; }
.teal { stroke: #1c8c89; color: #1c8c89; }
.pink { stroke: #cf2fa0; color: #cf2fa0; }
.red { stroke: #d14a54; color: #d14a54; }
.indigo { stroke: #5b62dc; color: #5b62dc; }
.green { stroke: #7db52a; color: #7db52a; }
.mag { stroke: #d1377f; color: #d1377f; }
.violet { stroke: #b53bc4; color: #b53bc4; }
.lilac { stroke: #8a5cc9; }

.watermark { position: absolute; left: 1115px; top: 654px; width: 200px; height: 68px; overflow: visible; }
.wm { fill: rgba(255, 255, 255, .6); font: 400 51px Roboto, sans-serif; filter: drop-shadow(0 0 1.500px rgba(0, 0, 0, .4)); }
.wm path { fill: none; stroke: rgba(255, 255, 255, .5); stroke-width: 5; stroke-linejoin: round; stroke-linecap: round; }

.taskbar { height: 40px; flex: none; display: flex; background: linear-gradient(90deg, #001822, #01111e 60%, #020a18); color: #fff; }
.start { width: 48px; display: flex; align-items: center; justify-content: center; }
.start svg { width: 16px; height: 16px; }
.search { width: 288px; display: flex; align-items: center; padding-left: 12px; background: #f2f2f2; border: 1px solid #c9c9c9; border-left: 0; font-size: 14.800px; color: #333; }
.glass { width: 17px; height: 17px; margin-right: 11px; }
.diya { width: 64px; height: 36px; margin-left: auto; margin-right: 7px; }
.task { width: 49px; display: flex; align-items: center; justify-content: center; }
.task:not(.current) svg { margin-left: -2px; }
.tv { width: 18px; height: 18px; }
.app { width: 24px; height: 24px; }
.app.folder { width: 22px; height: 20px; }
.edge { margin-left: 2px; }
.current { width: 48px; background: #33474f; border-bottom: 2px solid #76b9ed; }
.current .app { width: 22px; height: 22px; margin-top: 2px; }
.tray { margin-left: auto; display: flex; align-items: center; padding-right: 4px; }
.up { width: 12px; height: 8px; margin-right: 12px; }
.meet { width: 14px; height: 16px; margin-right: 8px; }
.vol { width: 18px; height: 16px; margin-right: 7px; }
.net { width: 16px; height: 14px; margin-right: 7px; }
.clock { width: 58px; display: flex; flex-direction: column; align-items: center; font-size: 11.800px; line-height: 18px; padding-bottom: 2px; margin-right: 15px; }
.note { width: 16px; height: 16px; }
.peek { width: 1px; height: 40px; margin-left: 20px; background: #4a5360; }
</style>
